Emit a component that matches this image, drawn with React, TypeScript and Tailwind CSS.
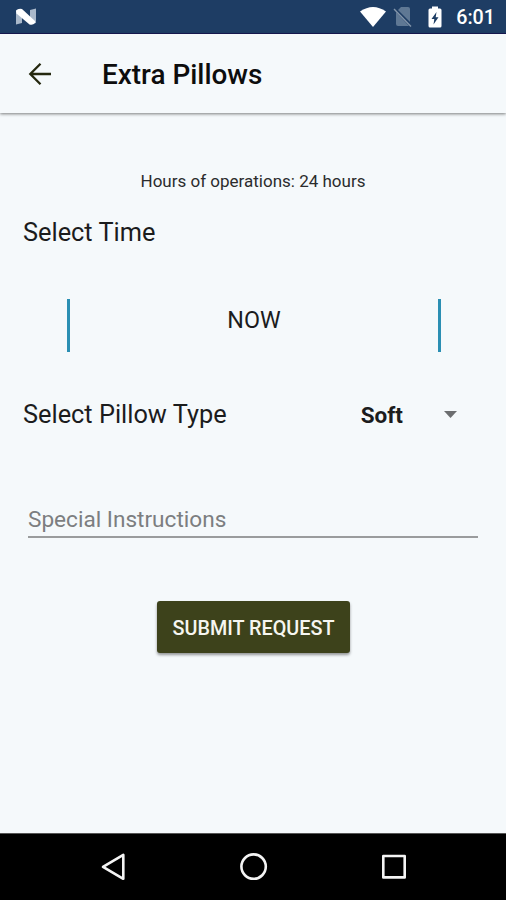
import type { ReactNode } from 'react';

function StatusBar() {
  return (
    <div className="flex h-[34px] shrink-0 items-center border-b border-[#171a55] bg-[#1e3d64] pr-[11px] pl-[15px] text-white">
      <svg className="mt-px" width="22" height="18" viewBox="0 0 22 18">
        <path d="M1 2 L7 1 V15 L1 16.5 Z" fill="#a9b8ca" />
        <path d="M15 2 L21 0.5 V15 L15 16 Z" fill="#a9b8ca" />
        <path d="M1 3 Q3 0 7 1 L20 13 V15 Q18 17.5 14.5 16.5 L1.5 5.5 Z" fill="#fff" />
      </svg>
      <svg className="ml-auto" width="28" height="22" viewBox="0 0 28 22">
        <path d="M1 5.5 Q14 -3.5 27 5.5 L14 21 Z" fill="#fff" />
      </svg>
      <svg className="ml-[6px]" width="20" height="22" viewBox="0 0 20 22">
        <path d="M8 1 H15 Q17 1 17 3 V16 L5 4 Z" fill="#5f7894" />
        <path d="M3 6 L16 20 H5 Q3 20 3 18 Z" fill="#5f7894" />
        <path d="M1 3 L18 20.5" stroke="#8496ab" strokeWidth="1.4" />
      </svg>
      <svg className="ml-[15px]" width="14" height="22" viewBox="0 0 14 22">
        <path d="M4 0.5 H10 V2.5 H12 Q13.5 2.5 13.5 4 V20 Q13.5 21.5 12 21.5 H2 Q0.5 21.5 0.5 20 V4 Q0.5 2.5 2 2.5 H4 Z" fill="#fff" />
        <path d="M8.5 6 L3.5 13 H6.3 L5.5 18.5 L10.5 11.3 H7.7 Z" fill="#1e3d64" />
      </svg>
      <span className="mt-[3px] ml-[14px] text-[19.7px] leading-none font-medium">6:01</span>
    </div>
  );
}

function Header({ title }: { title: string }) {
  return (
    <header className="flex h-[79px] shrink-0 items-center bg-[#f5f9fb] pl-[28px] shadow-[0_1px_3px_rgba(0,0,0,0.5)]">
      <button aria-label="Back">
        <svg width="24" height="24" viewBox="0 0 24 24" fill="none" stroke="#25280f" strokeWidth="2.3">
          <path d="M23 12 H3 M12.5 1.8 L2.3 12 L12.5 22.2" />
        </svg>
      </button>
      <h1 className="mt-[2px] ml-[50px] text-[27.9px] leading-8 font-medium text-[#0d0d0d]">{title}</h1>
    </header>
  );
}

function TimePicker({ value }: { value: string }) {
  return (
    <div className="mx-[67px] mt-[51px] flex h-[53px] w-[374px] justify-center border-x-[3px] border-[#2b8fb3] pt-[5px]">
      <span className="text-[23.3px] leading-8 text-[#1b1c1d]">{value}</span>
    </div>
  );
}

function NavButton({ label, children }: { label: string; children: ReactNode }) {
  return (
    <button aria-label={label} className="flex w-[140px] justify-center">
      <svg width="30" height="30" viewBox="0 0 30 30" fill="none" stroke="#f4f4f4" strokeWidth="2.6" strokeLinejoin="round">
        {children}
      </svg>
    </button>
  );
}

function NavBar() {
  return (
    <nav className="flex h-[67px] shrink-0 items-center justify-center border-t border-[#555] bg-black pl-px">
      <NavButton label="Back">
        <path d="M24.3 2.8 V26.8 L4 14.8 Z" />
      </NavButton>
      <NavButton label="Home">
        <circle cx="14.6" cy="14.6" r="12.2" />
      </NavButton>
      <NavButton label="Recent">
        <rect x="4.3" y="4" width="21.4" height="21.4" />
      </NavButton>
    </nav>
  );
}

export default function App() {
  return (
    <div className="flex h-[900px] w-[506px] flex-col overflow-hidden bg-[#f5f9fb] font-[Roboto,sans-serif]">
      <StatusBar />
      <Header title="Extra Pillows" />
      <main className="flex flex-1 flex-col">
        <p className="mt-[56px] text-center text-[17px] leading-6 text-[#2b2c2d]">Hours of operations: 24 hours</p>
        <h2 className="mt-[23px] ml-[23px] text-[25.35px] leading-8 text-[#1b1c1d]">Select Time</h2>
        <TimePicker value="NOW" />
        <div className="mt-[46px] flex h-8 items-center pr-[49px] pl-[23px] text-[#1b1c1d]">
          <h2 className="text-[25.35px] leading-8">Select Pillow Type</h2>
          <button className="ml-auto flex items-center">
            <span className="pt-px text-[22.5px] leading-8 font-bold">Soft</span>
            <svg className="mt-px ml-[41px]" width="13" height="7" viewBox="0 0 13 7">
              <path d="M0 0 H13 L6.5 7 Z" fill="#6c6e70" />
            </svg>
          </button>
        </div>
        <div className="mx-[28px] mt-[74px] h-[34px] border-b-2 border-[#9a9c9d] text-[22.6px] leading-8 text-[#7c7e80]">
          Special Instructions
        </div>
        <button className="mt-[63px] ml-[157px] h-[52px] w-[193px] rounded-[3px] bg-[#3d421b] pt-[3px] text-[19.8px] font-medium text-[#f6f6f0] shadow-[0_2px_3px_rgba(0,0,0,0.4)]">
          SUBMIT REQUEST
        </button>
      </main>
      <NavBar />
    </div>
  );
}
